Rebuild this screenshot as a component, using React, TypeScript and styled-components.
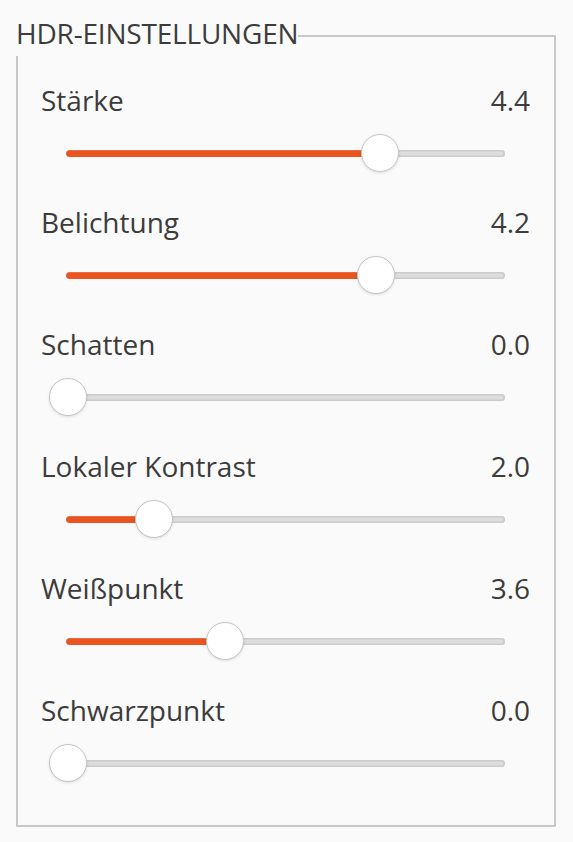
import React from "react";
import styled, { createGlobalStyle } from "styled-components";

const GlobalStyle = createGlobalStyle`
  html, body {
    margin: 0;
    background: #fafafa;
  }
  body {
    padding: 16px 17px 16px 16px;
    font-family: "Open Sans", "Noto Sans", sans-serif;
    color: #3c3c3c;
  }
  * { box-sizing: border-box; }
`;

const Group = styled.fieldset`
  margin: 0;
  padding: 27px 24px 42px 23px;
  border: 2px solid #c8c8c8;
  min-width: 0;
`;

const Legend = styled.legend`
  margin-left: -25px;
  padding: 0 0 6px 0;
  font-size: 28px;
  line-height: 34px;
  color: #3c3c3c;
  letter-spacing: -0.2px;
`;

const List = styled.div`
  display: flex;
  flex-direction: column;
  gap: 32px;
`;

const Row = styled.div`
  display: flex;
  flex-direction: column;
  gap: 16px;
`;

const Header = styled.div`
  display: flex;
  justify-content: space-between;
  align-items: baseline;
  font-size: 28px;
  line-height: 34px;
`;

const Label = styled.span`
  color: #3c3c3c;
`;

const Value = styled.span`
  color: #3c3c3c;
`;

const SliderBox = styled.div`
  position: relative;
  height: 40px;
  margin: 0 8px;
  display: flex;
  align-items: center;
`;

const Track = styled.div`
  flex: 1;
  margin: 0 17px;
  height: 7px;
  border-radius: 4px;
  background: #dddddd;
  box-shadow: inset 0 0 0 1.5px #cbcbcb;
  overflow: hidden;
`;

const Fill = styled.div`
  height: 100%;
  background: #e95420;
  border-radius: 4px;
  box-shadow: inset 0 1px 0 rgba(255, 255, 255, 0.15);
`;

const Thumb = styled.div`
  position: absolute;
  top: 1px;
  width: 38px;
  height: 38px;
  border-radius: 50%;
  background: #ffffff;
  border: 1.5px solid #c6c6c6;
  box-shadow: 0 1px 3px rgba(0, 0, 0, 0.12);
`;

const RANGE = 435;

type Setting = { label: string; value: string; frac: number };

const settings: Setting[] = [
  { label: "Stärke", value: "4.4", frac: 0.717 },
  { label: "Belichtung", value: "4.2", frac: 0.708 },
  { label: "Schatten", value: "0.0", frac: 0 },
  { label: "Lokaler Kontrast", value: "2.0", frac: 0.197 },
  { label: "Weißpunkt", value: "3.6", frac: 0.36 },
  { label: "Schwarzpunkt", value: "0.0", frac: 0 },
];

function Slider({ frac }: { frac: number }) {
  const offset = frac * RANGE;
  return (
    <SliderBox>
      <Track>
        <Fill style={{ width: frac > 0 ? `${offset + 2}px` : "0px" }} />
      </Track>
      <Thumb style={{ left: `${offset}px` }} />
    </SliderBox>
  );
}

export default function App() {
  return (
    <>
      <GlobalStyle />
      <Group>
        <Legend>HDR-EINSTELLUNGEN</Legend>
        <List>
          {settings.map((s) => (
            <Row key={s.label}>
              <Header>
                <Label>{s.label}</Label>
                <Value>{s.value}</Value>
              </Header>
              <Slider frac={s.frac} />
            </Row>
          ))}
        </List>
      </Group>
    </>
  );
}
